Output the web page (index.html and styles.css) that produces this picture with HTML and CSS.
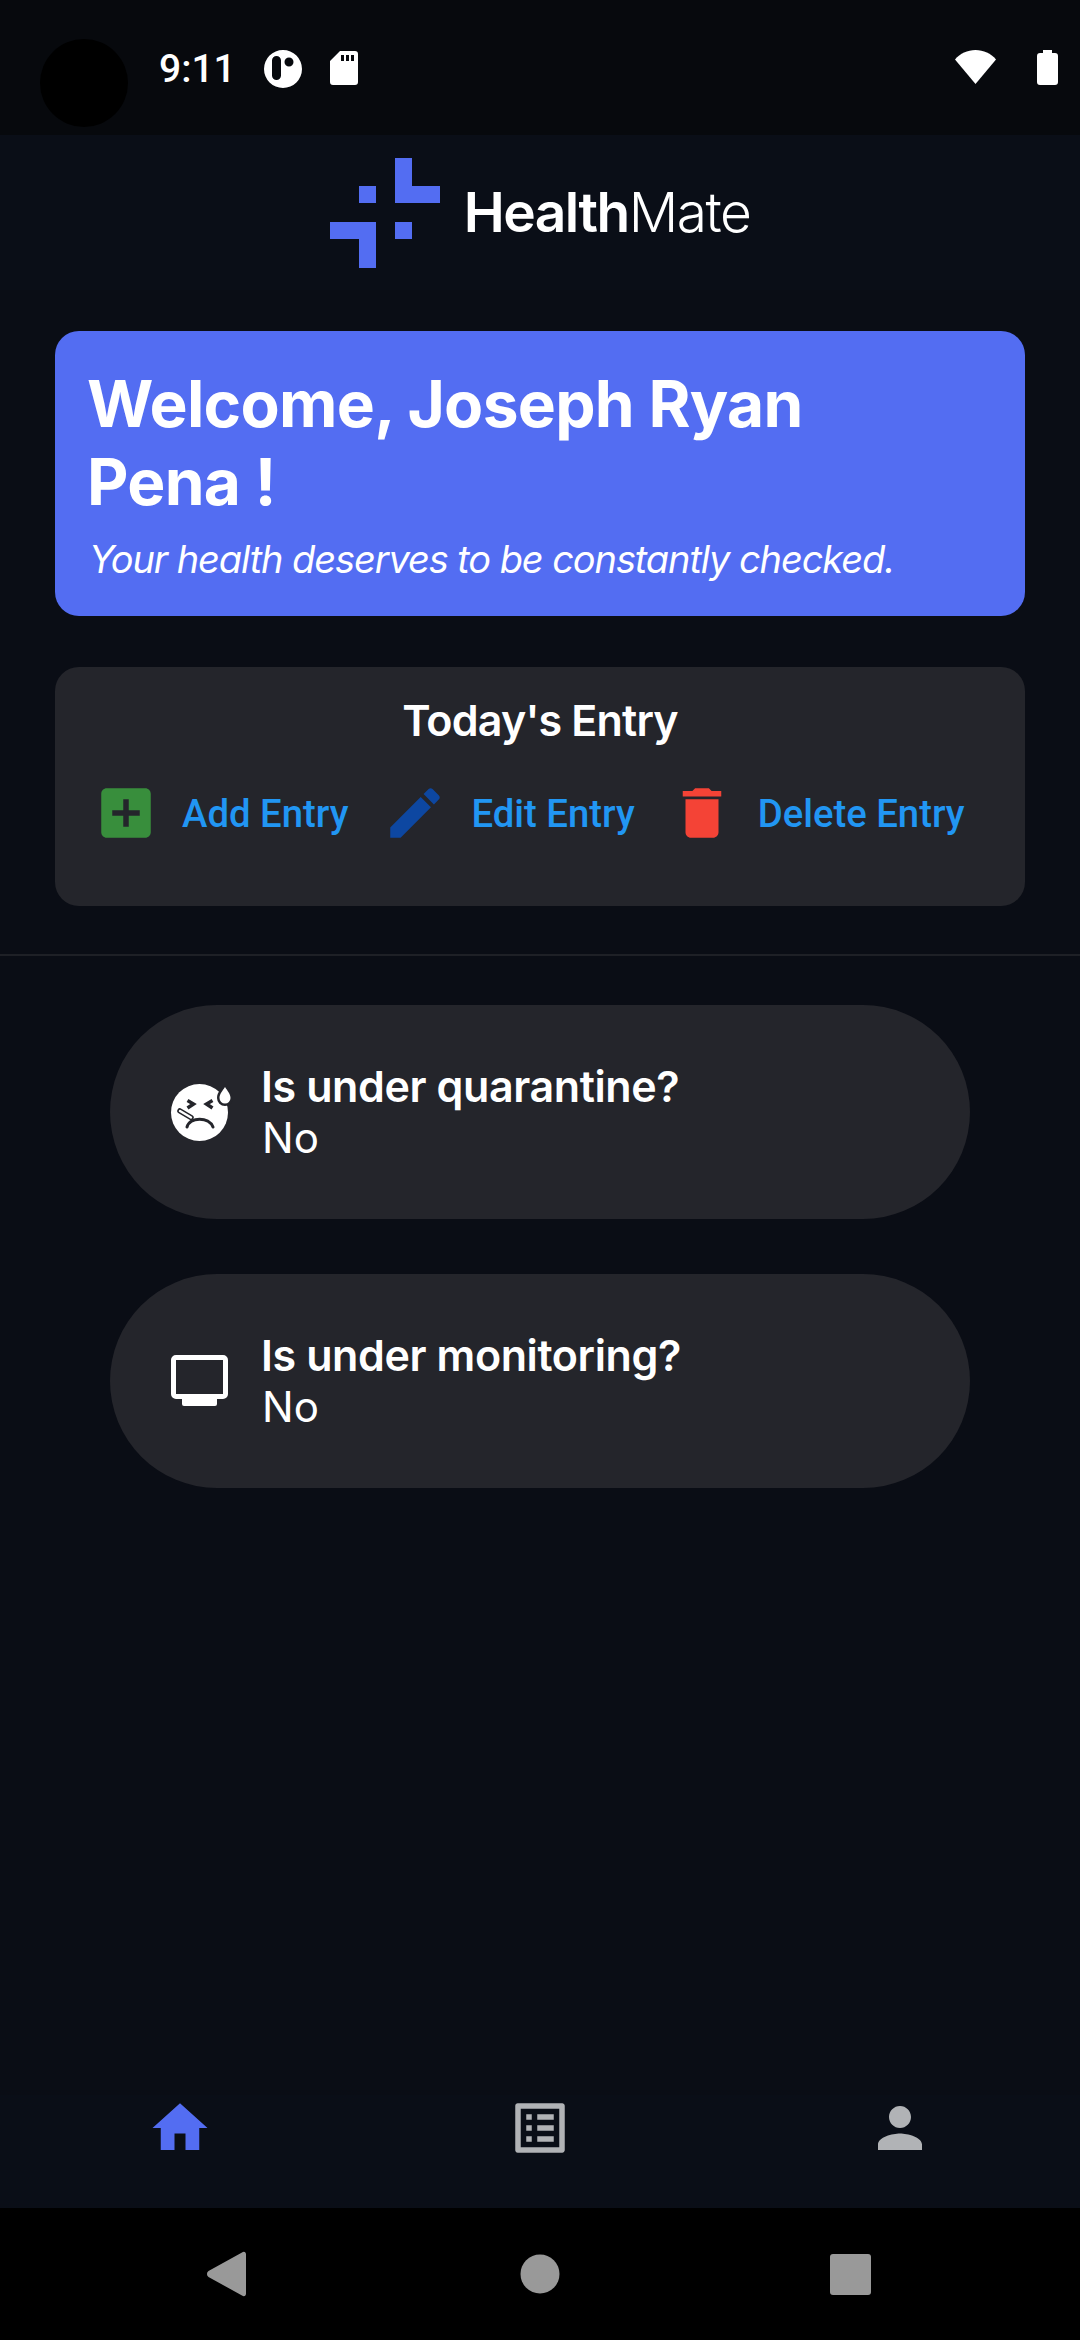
FILE: index.html
```html
<!DOCTYPE html>
<html lang="en">
<head>
  <meta charset="UTF-8" />
  <title>HealthMate</title>
  <link rel="stylesheet" href="styles.css">
</head>
<body>
  <div class="status-bar">
    <div class="camera"></div>
    <div class="status-left">
      <span class="time">9:11</span>
      <svg class="st-app" width="38" height="38" viewBox="0 0 38 38"><path fill-rule="evenodd" d="M19 0a19 19 0 1 0 0 38a19 19 0 0 0 0-38zM12.500 6a4.500 4.500 0 0 1 4.500 4.500v15a4.500 4.500 0 0 1-9 0v-15A4.500 4.500 0 0 1 12.500 6zM25 7.500a4.500 4.500 0 1 1 0 9a4.500 4.500 0 0 1 0-9z"/></svg>
      <svg class="st-sd" width="28" height="34" viewBox="0 0 28 34"><path fill-rule="evenodd" d="M10 0h15a3 3 0 0 1 3 3v28a3 3 0 0 1-3 3H3a3 3 0 0 1-3-3V10zM11 4v6h3V4zM16 4v6h3V4zM21 4v6h3V4z"/></svg>
    </div>
    <div class="status-right">
      <svg width="41" height="34" viewBox="0 0 41 34"><path d="M0 9.500C5 3.500 12.500 0 20.500 0S36 3.500 41 9.500L20.500 34z"/></svg>
      <svg width="21" height="35" viewBox="0 0 21 35"><path d="M6 0h9v3h3a3 3 0 0 1 3 3v26a3 3 0 0 1-3 3H3a3 3 0 0 1-3-3V6a3 3 0 0 1 3-3h3z"/></svg>
    </div>
  </div>

  <header class="app-header">
    <svg class="logo" width="110" height="110" viewBox="0 0 110 110">
      <path d="M65 0h17v28h28v17H65zM29 28h17v17H29zM0 64h46v46H29V81H0zM65 64h17v17H65z"/>
    </svg>
    <div class="brand"><b>Health</b><span>Mate</span></div>
  </header>

  <main class="content">
    <section class="welcome">
      <h1>Welcome, Joseph Ryan Pena !</h1>
      <p>Your health deserves to be constantly checked.</p>
    </section>

    <section class="entry-card">
      <h2>Today's Entry</h2>
      <div class="entry-actions">
        <div class="action">
          <svg class="ic-add" width="66" height="66" viewBox="0 0 24 24"><path d="M19 3H5c-1.110 0-2 .9-2 2v14c0 1.100.89 2 2 2h14c1.100 0 2-.9 2-2V5c0-1.100-.9-2-2-2zm-2 10h-4v4h-2v-4H7v-2h4V7h2v4h4v2z"/></svg>
          <span>Add Entry</span>
        </div>
        <div class="action">
          <svg class="ic-edit" width="66" height="66" viewBox="0 0 24 24"><path d="M3 17.250V21h3.750L17.810 9.940l-3.750-3.750L3 17.250zM20.710 7.040c.39-.39.39-1.020 0-1.410l-2.340-2.340c-.39-.39-1.020-.39-1.410 0l-1.830 1.830 3.750 3.750 1.830-1.830z"/></svg>
          <span>Edit Entry</span>
        </div>
        <div class="action">
          <svg class="ic-delete" width="66" height="66" viewBox="0 0 24 24"><path d="M6 19c0 1.100.9 2 2 2h8c1.100 0 2-.9 2-2V7H6v12zM19 4h-3.500l-1-1h-5l-1 1H5v2h14V4z"/></svg>
          <span>Delete Entry</span>
        </div>
      </div>
    </section>

    <hr class="divider">

    <section class="status-pill">
      <svg class="pill-icon" width="80" height="80" viewBox="0 -3 80 80">
        <circle class="white" cx="39.500" cy="37.500" r="28.500"/>
        <path class="cut" d="M65 8c-3 5-8 9-8 15a8 8 0 0 0 16 0c0-6-5-10-8-15z"/>
        <path class="white" d="M65 12c-2.500 4-5.500 7-5.500 11a5.500 5.500 0 0 0 11 0c0-4-3-7-5.500-11z"/>
        <path class="line eyes" d="M27.500 25.500l6 3.500-6 4M52.500 25.500l-6 3.500 6 4"/>
        <path class="line" d="M27 52c3-10.500 22-10.500 26 0"/>
        <path class="line thick" d="M20 36l11 6.500"/>
        <path class="line thin" d="M20 36l11 6.500"/>
      </svg>
      <div class="pill-text">
        <strong>Is under quarantine?</strong>
        <span>No</span>
      </div>
    </section>

    <section class="status-pill">
      <svg class="pill-icon" width="80" height="80" viewBox="0 0 80 80">
        <rect class="outline" x="13.500" y="16.500" width="52" height="39" rx="2.500"/>
        <path class="white" d="M22 58h35v5q0 2-2 2H24q-2 0-2-2z"/>
      </svg>
      <div class="pill-text">
        <strong>Is under monitoring?</strong>
        <span>No</span>
      </div>
    </section>
  </main>

  <nav class="tab-bar">
    <svg class="tab active" width="66" height="66" viewBox="0 0 24 24"><path d="M10 20v-6h4v6h5v-8h3L12 3 2 12h3v8z"/></svg>
    <svg class="tab" width="66" height="66" viewBox="0 0 24 24"><path d="M19 5v14H5V5h14m1.100-2H3.900c-.5 0-.9.4-.9.9v16.200c0 .4.4.9.9.9h16.200c.4 0 .9-.5.9-.9V3.900c0-.5-.5-.9-.9-.9zM11 7h6v2h-6V7zm0 4h6v2h-6v-2zm0 4h6v2h-6zM7 7h2v2H7zm0 4h2v2H7zm0 4h2v2H7z"/></svg>
    <svg class="tab" width="66" height="66" viewBox="0 0 24 24"><path d="M12 12c2.210 0 4-1.790 4-4s-1.790-4-4-4-4 1.790-4 4 1.790 4 4 4zm0 2c-2.670 0-8 1.340-8 4v2h16v-2c0-2.660-5.330-4-8-4z"/></svg>
  </nav>

  <div class="nav-bar">
    <svg width="39" height="46" viewBox="0 0 39 46"><path d="M35 1.500c2-1.500 4-.5 4 2v39c0 2.500-2 3.500-4 2L1.500 26c-2-1.500-2-4.500 0-6z"/></svg>
    <svg class="nav-home" width="40" height="40" viewBox="0 0 40 40"><circle cx="20" cy="20" r="19.500"/></svg>
    <svg width="41" height="41" viewBox="0 0 41 41"><rect width="41" height="41" rx="3"/></svg>
  </div>
</body>
</html>
```

FILE: styles.css
```css
* {
  box-sizing: border-box;
}

body {
  margin: 0;
  width: 1080px;
  height: 2340px;
  display: flex;
  flex-direction: column;
  background-color: #0a0d15;
  color: white;
  font-family: 'Inter', sans-serif;
  overflow: hidden;
}

/* status bar */
.status-bar {
  position: relative;
  height: 135px;
  flex-shrink: 0;
  display: flex;
  justify-content: space-between;
  padding: 50px 22px 0 159px;
  background-color: #07090d;
  fill: white;
}

.camera {
  position: absolute;
  left: 40px;
  top: 39px;
  width: 88px;
  height: 88px;
  border-radius: 50%;
  background: black;
}

.status-left {
  display: flex;
  align-items: flex-start;
}

.time {
  font-family: 'Roboto', sans-serif;
  font-size: 39px;
  font-weight: 500;
  line-height: 38px;
  width: 105px;
}

.st-sd {
  margin: 1px 0 0 28px;
}

.status-right {
  display: flex;
  align-items: flex-start;
  gap: 41px;
}

/* app header */
.app-header {
  height: 155px;
  flex-shrink: 0;
  display: flex;
  align-items: flex-start;
  justify-content: center;
  gap: 24px;
  padding-top: 23px;
  background-color: #0a0e17;
}

.logo {
  fill: #536df2;
}

.brand {
  margin-top: 22px;
  font-size: 55px;
  line-height: 64px;
  letter-spacing: -1.500px;
}

.brand b {
  font-weight: 600;
}

.brand span {
  font-weight: 300;
}

/* main */
.content {
  flex: 1;
  padding: 41px 55px 0;
  display: flex;
  flex-direction: column;
}

.welcome {
  height: 285px;
  padding: 34px 100px 0 32px;
  border-radius: 24px;
  background-color: #536df2;
}

.welcome h1 {
  margin: 0;
  font-size: 64px;
  font-weight: 700;
  line-height: 78px;
  letter-spacing: -0.7px;
}

.welcome p {
  margin: 15px -90px 0 2px;
  font-size: 38px;
  font-style: italic;
  line-height: 46px;
  letter-spacing: -1.100px;
}

.entry-card {
  height: 239px;
  margin-top: 51px;
  padding-top: 28px;
  border-radius: 24px;
  background-color: #24252b;
}

.entry-card h2 {
  margin: 0;
  text-align: center;
  font-size: 43px;
  font-weight: 600;
  line-height: 50px;
  letter-spacing: -0.8px;
}

.entry-actions {
  display: flex;
  gap: 34px;
  margin-top: 35px;
  padding-left: 38px;
}

.action {
  display: flex;
  align-items: center;
  gap: 23px;
  color: #2196f3;
  font-family: 'Roboto', sans-serif;
  font-size: 38.300px;
  font-weight: 500;
  white-space: nowrap;
}

.ic-add {
  fill: #388e3c;
}

.ic-edit {
  fill: #0d47a1;
}

.ic-delete {
  fill: #f44336;
}

.divider {
  width: 1080px;
  height: 2px;
  margin: 48px -55px 49px;
  border: none;
  background-color: #1e2026;
}

.status-pill {
  width: 860px;
  height: 214px;
  margin: 0 auto 55px;
  padding-left: 50px;
  display: flex;
  align-items: center;
  gap: 21px;
  border-radius: 107px;
  background-color: #24252b;
}

.pill-icon .white {
  fill: white;
}

.pill-icon .cut {
  fill: #24252b;
}

.pill-icon .line {
  fill: none;
  stroke: #24252b;
  stroke-width: 3;
  stroke-linecap: round;
}

.pill-icon .eyes {
  stroke-width: 3.500;
  stroke-linecap: butt;
}

.pill-icon .thick {
  stroke-width: 5.500;
}

.pill-icon .thin {
  stroke: white;
  stroke-width: 2.400;
}

.pill-icon .outline {
  fill: none;
  stroke: white;
  stroke-width: 5;
}

.pill-text {
  display: flex;
  flex-direction: column;
  font-size: 42px;
  line-height: 52px;
}

.pill-text span {
  margin-left: 1px;
}

.pill-text strong {
  font-size: 43px;
  font-weight: 600;
  letter-spacing: -0.4px;
}

/* bottom */
.tab-bar {
  height: 113px;
  flex-shrink: 0;
  display: grid;
  grid-template-columns: repeat(3, 1fr);
  justify-items: center;
  background-color: #0a0e17;
  fill: #b1b3b6;
}

.tab.active {
  fill: #536df2;
}

.nav-bar {
  height: 132px;
  flex-shrink: 0;
  display: flex;
  justify-content: space-between;
  align-items: center;
  padding: 0 209px 0 207px;
  background: black;
  fill: #999;
}

.nav-home {
  margin-left: 4px;
}
```
